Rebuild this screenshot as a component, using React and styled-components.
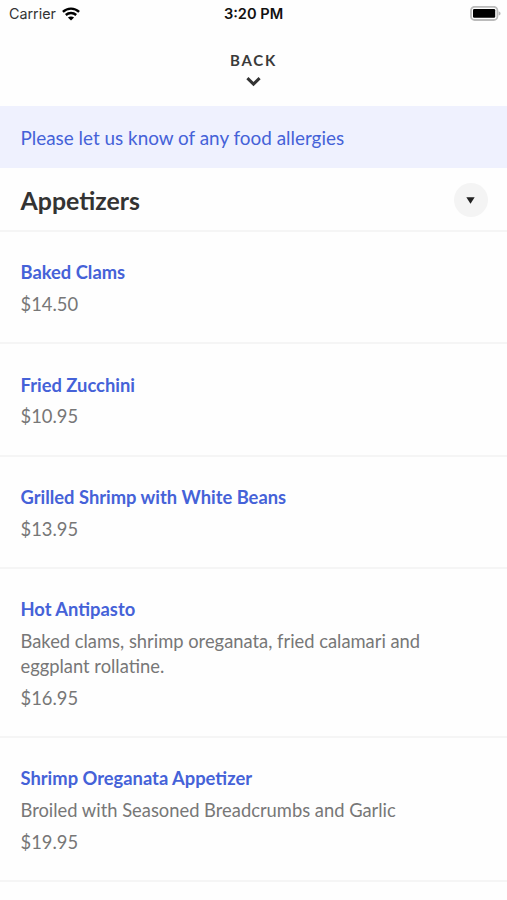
import React from 'react';
import styled, {createGlobalStyle} from 'styled-components';

const GlobalStyle = createGlobalStyle`
  * {
    box-sizing: border-box;
  }

  body {
    margin: 0;
    background-color: #fefefe;
    font-family: Lato, sans-serif;
    overflow: hidden;
  }
`;

const Screen = styled.div`
  width: 100%;
  height: 900px;
  overflow: hidden;
`;

const StatusBar = styled.div`
  display: grid;
  grid-template-columns: 1fr auto 1fr;
  align-items: center;
  height: 27px;
  padding: 0 6px 0 9px;
  font-family: Inter, sans-serif;
  font-size: 14.3px;
  color: #111;
`;

const Carrier = styled.div`
  display: flex;
  align-items: center;
  gap: 6px;
  color: #333;
`;

const Time = styled.div`
  margin-right: 3px;
  font-size: 14.6px;
  font-weight: 600;
`;

const Battery = styled.svg`
  justify-self: end;
`;

const BackButton = styled.button`
  display: flex;
  flex-direction: column;
  align-items: center;
  gap: 7px;
  width: 100%;
  height: 79px;
  padding: 24px 0 0;
  border: none;
  background: none;
  font-family: inherit;
  font-size: 15px;
  font-weight: 700;
  line-height: 18px;
  letter-spacing: 1.8px;
  color: #3a3a3a;
`;

const Notice = styled.div`
  height: 62px;
  padding: 0 20.5px;
  background-color: #eff1fe;
  font-size: 18.9px;
  line-height: 64px;
  color: #4562d8;
`;

const SectionHeader = styled.div`
  display: flex;
  align-items: center;
  justify-content: space-between;
  height: 64px;
  padding: 0 19.5px 0 20.5px;
  border-bottom: 2px solid #f5f5f5;
`;

const SectionTitle = styled.h2`
  margin: 1px 0 0;
  font-size: 24.9px;
  font-weight: 700;
  color: #333;
`;

const ToggleButton = styled.button`
  display: flex;
  align-items: center;
  justify-content: center;
  width: 34px;
  height: 34px;
  margin-top: 2px;
  padding: 0;
  border: none;
  border-radius: 50%;
  background-color: #f4f4f4;
`;

const MenuItem = styled.div`
  display: flex;
  flex-direction: column;
  gap: 7.35px;
  padding: 28.1px 80px 26px 20.5px;
  border-bottom: 2px solid #f5f5f5;
  font-size: 18.35px;
  line-height: 24.5px;
  color: #777;
`;

const ItemName = styled.div`
  font-weight: 700;
  color: #4562d8;
`;

const Menu = styled.section`
  display: flex;
  flex-direction: column;
`;

const items = [
    { name: 'Baked Clams', price: '$14.50' },
    { name: 'Fried Zucchini', price: '$10.95' },
    { name: 'Grilled Shrimp with White Beans', price: '$13.95' },
    {
        name: 'Hot Antipasto',
        description: 'Baked clams, shrimp oreganata, fried calamari and eggplant rollatine.',
        price: '$16.95',
    },
    {
        name: 'Shrimp Oreganata Appetizer',
        description: 'Broiled with Seasoned Breadcrumbs and Garlic',
        price: '$19.95',
    },
];

const WifiIcon = () => (
    <svg width="18" height="14" viewBox="0 0 18 14" fill="none" stroke="#000" strokeWidth="2.4">
        <path d="M0.9 4.8C5.4 0.5 12.6 0.5 17.1 4.8" />
        <path d="M3.8 8C6.8 5.3 11.2 5.3 14.2 8" />
        <path d="M9 13.6L5.9 10.5C7.7 9 10.3 9 12.1 10.5Z" fill="#000" stroke="none" />
    </svg>
);

const BatteryIcon = () => (
    <Battery width="31" height="15" viewBox="0 0 31 15">
        <rect x="1" y="0.8" width="26.4" height="13.2" rx="3.6" fill="none" stroke="#bbb" strokeWidth="1.8" />
        <rect x="3" y="3" width="22.2" height="8.8" rx="1.2" fill="#000" />
        <path d="M28.6 5.2C31.2 6 31.2 8.8 28.6 9.6Z" fill="#b5b5b5" />
    </Battery>
);

function App() {
    return (
        <Screen>
            <GlobalStyle />
            <StatusBar>
                <Carrier>
                    Carrier
                    <WifiIcon />
                </Carrier>
                <Time>3:20 PM</Time>
                <BatteryIcon />
            </StatusBar>
            <BackButton>
                BACK
                <svg width="15" height="11" viewBox="0 0 15 11" fill="none">
                    <path d="M1.4 2.2L7.5 8.1L13.6 2.2" stroke="#333" strokeWidth="3" />
                </svg>
            </BackButton>
            <Notice>Please let us know of any food allergies</Notice>
            <SectionHeader>
                <SectionTitle>Appetizers</SectionTitle>
                <ToggleButton aria-label="Toggle section">
                    <svg width="9" height="7" viewBox="0 0 9 7">
                        <path d="M0.3 0.3H8.7L4.5 6.8Z" fill="#222" />
                    </svg>
                </ToggleButton>
            </SectionHeader>
            <Menu>
                {items.map(({ name, description, price }) => (
                    <MenuItem key={name}>
                        <ItemName>{name}</ItemName>
                        {description && <div>{description}</div>}
                        <div>{price}</div>
                    </MenuItem>
                ))}
            </Menu>
        </Screen>
    );
}

export default App;
